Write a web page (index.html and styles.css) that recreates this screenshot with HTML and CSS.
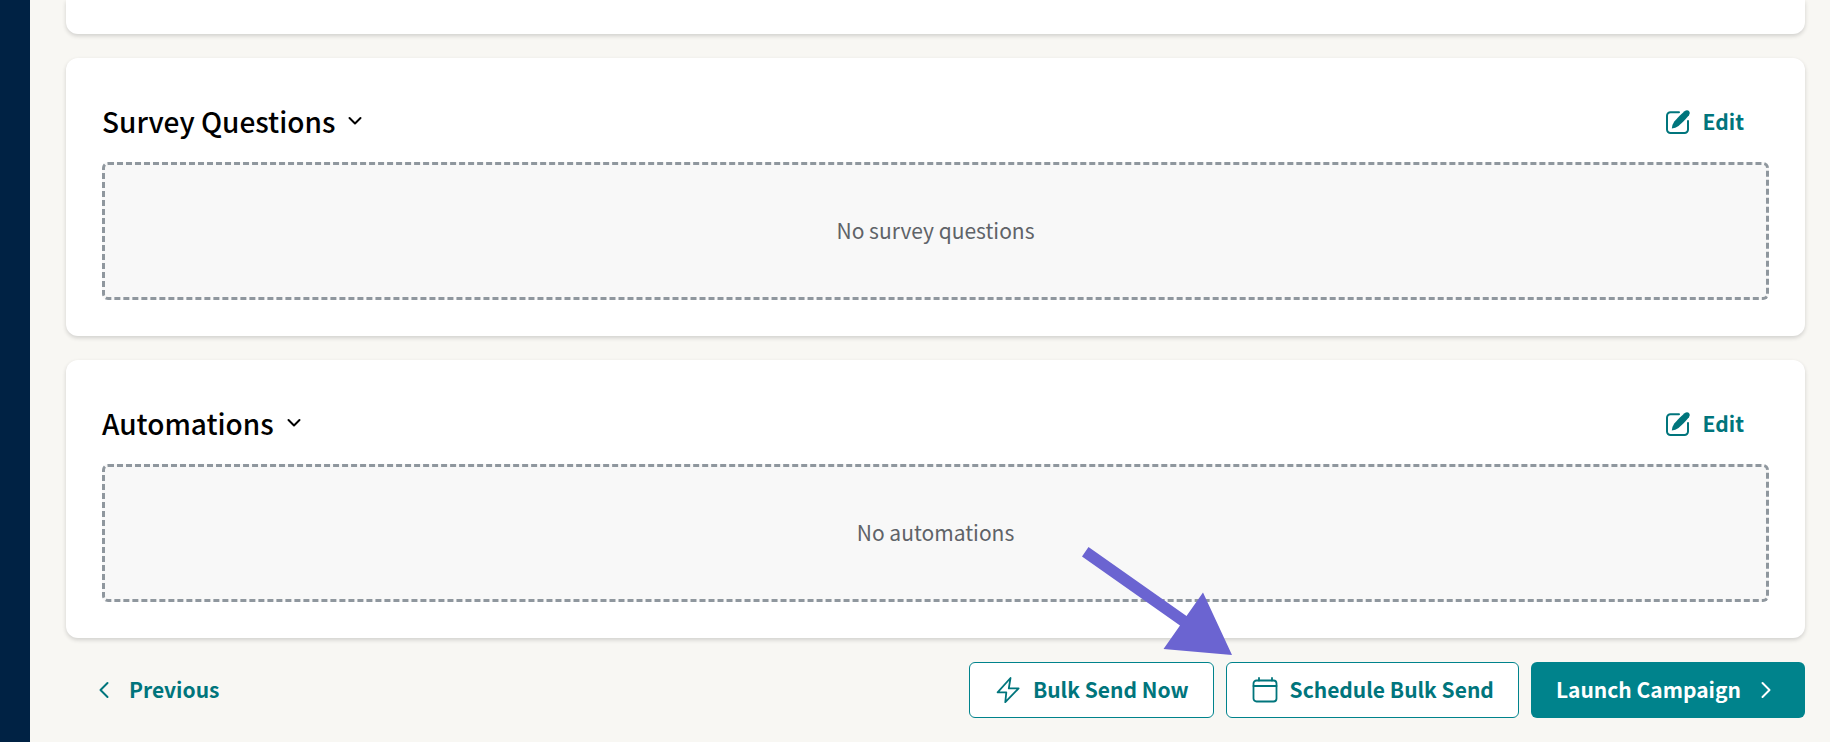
FILE: index.html
```html
<!DOCTYPE html>
<html lang="en">
    <head>
        <meta charset="utf-8">
        <title>Launch Campaign</title>
        <link rel="stylesheet" href="styles.css">
    </head>
    <body>
        <div class="sidebar"></div>
        <main class="page">
            <section class="card card-cut"></section>

            <section class="card">
                <div class="card-header">
                    <h2>
                        <button class="toggle" type="button">
                            Survey Questions
                            <svg class="chevron-down" viewBox="0 0 14 10"><path d="M1.5 2 L7 7.5 L12.5 2"/></svg>
                        </button>
                    </h2>
                    <button class="btn btn-text" type="button">
                        <svg class="icon" viewBox="0 0 26 26">
                            <path class="line" d="M14 3.2H5.5A3.5 3.5 0 0 0 2 6.7V20.5A3.5 3.5 0 0 0 5.5 24H19.5A3.5 3.5 0 0 0 23 20.5V12"/>
                            <path class="fill" d="M19.5 2.3Q22 .5 24 2Q25.7 4 24 6.3Q19 12.5 13.5 17Q10.5 19.3 6.8 19.6Q6.8 16 9.3 12.5Q14 7 19.5 2.3Z"/>
                        </svg>
                        Edit
                    </button>
                </div>
                <div class="empty">No survey questions</div>
            </section>

            <section class="card">
                <div class="card-header">
                    <h2>
                        <button class="toggle" type="button">
                            Automations
                            <svg class="chevron-down" viewBox="0 0 14 10"><path d="M1.5 2 L7 7.5 L12.5 2"/></svg>
                        </button>
                    </h2>
                    <button class="btn btn-text" type="button">
                        <svg class="icon" viewBox="0 0 26 26">
                            <path class="line" d="M14 3.2H5.5A3.5 3.5 0 0 0 2 6.7V20.5A3.5 3.5 0 0 0 5.5 24H19.5A3.5 3.5 0 0 0 23 20.5V12"/>
                            <path class="fill" d="M19.5 2.3Q22 .5 24 2Q25.7 4 24 6.3Q19 12.5 13.5 17Q10.5 19.3 6.8 19.6Q6.8 16 9.3 12.5Q14 7 19.5 2.3Z"/>
                        </svg>
                        Edit
                    </button>
                </div>
                <div class="empty">No automations</div>
            </section>

            <div class="actions">
                <button class="btn btn-text btn-previous" type="button">
                    <svg class="chevron" viewBox="0 0 12 18"><path d="M9.5 2 L2.5 9 L9.5 16"/></svg>
                    Previous
                </button>
                <button class="btn btn-outline" type="button">
                    <svg class="icon" viewBox="0 0 26 26"><path class="thin" d="M15.5 1 L2.6 15.3 H11.3 L10.3 25.2 L23.6 11.4 H13.8 Z"/></svg>
                    Bulk Send Now
                </button>
                <div class="pointed">
                    <button class="btn btn-outline" type="button">
                        <svg class="icon" viewBox="0 0 26 26">
                            <rect class="thin" x="1.5" y="3.5" width="23" height="21" rx="3"/>
                            <path class="thin" d="M1.5 9H24.5M7 1V3.5M20 1V3.5"/>
                        </svg>
                        Schedule Bulk Send
                    </button>
                    <svg class="arrow" viewBox="0 0 152 110"><path d="M1 9.5 L7.5 0 L105.5 69 L122 45.5 L151 108 L82.5 102 L99 78.5 Z"/></svg>
                </div>
                <button class="btn btn-primary" type="button">
                    Launch Campaign
                    <svg class="chevron" viewBox="0 0 12 18"><path d="M2.5 2 L9.5 9 L2.5 16"/></svg>
                </button>
            </div>
        </main>
    </body>
</html>
```
FILE: styles.css
```css
* {
    box-sizing: border-box;
}

body {
    display: flex;
    min-height: 100vh;
    margin: 0;
    background: #f8f7f3;
    color: #000;
    font-family: "Noto Sans CJK SC", "Open Sans", sans-serif;
    font-size: 21px;
}

.sidebar {
    flex: none;
    width: 30px;
    background: #002244;
}

.page {
    flex: 1;
    display: flex;
    flex-direction: column;
    gap: 24px;
    padding: 0 25px 24px 36px;
}

.card {
    padding: 36px;
    border-radius: 12px;
    background: #fff;
    box-shadow: 0 2px 4px rgba(0, 0, 0, 0.16);
}

/* lower edge of the card scrolled off the top */
.card-cut {
    height: 34px;
    padding: 0;
    border-radius: 0 0 12px 12px;
}

.card-header {
    display: flex;
    align-items: center;
    justify-content: space-between;
    height: 56px;
    margin-bottom: 12px;
}

h2 {
    margin: 0;
    padding-bottom: 3px;
    font-size: 28px;
    font-weight: 500;
}

.toggle {
    display: flex;
    align-items: center;
    gap: 13px;
    padding: 0;
    border: 0;
    background: none;
    color: inherit;
    font: inherit;
    line-height: 40px;
}

.empty {
    display: flex;
    align-items: center;
    justify-content: center;
    height: 138px;
    padding-bottom: 2px;
    border: 3px dashed #8f979e;
    border-radius: 6px;
    background: #f8f8f8;
    color: #5f6368;
}

.btn {
    display: flex;
    align-items: center;
    height: 56px;
    padding: 0 24px 2px;
    gap: 12px;
    border: 1px solid transparent;
    border-radius: 6px;
    background: none;
    color: #00757c;
    font: inherit;
    font-weight: 600;
    white-space: nowrap;
}

.btn-outline {
    padding-left: 25px;
    border-color: #00838c;
    background: #fff;
}

.btn-primary {
    gap: 19px;
    padding-right: 32px;
    background: #00838c;
    color: #fff;
}

.btn-previous {
    gap: 19px;
    margin-right: auto;
    padding-left: 31px;
}

.icon,
.chevron {
    width: 26px;
    height: 26px;
    margin-top: 2px;
}

.chevron {
    width: 12px;
    height: 18px;
}

.chevron-down {
    width: 14px;
    height: 10px;
}

.line,
.thin,
.chevron,
.chevron-down {
    fill: none;
    stroke: currentColor;
    stroke-width: 2;
    stroke-linejoin: round;
    stroke-linecap: round;
}

.thin {
    stroke-width: 1.8;
}

.fill {
    fill: currentColor;
}

.actions {
    display: flex;
    gap: 12px;
}

.pointed {
    position: relative;
}

/* callout arrow, its tip just above the button's left corner */
.arrow {
    position: absolute;
    left: -145px;
    bottom: 61px;
    width: 152px;
    height: 110px;
    fill: #6b64d1;
    pointer-events: none;
}
```
